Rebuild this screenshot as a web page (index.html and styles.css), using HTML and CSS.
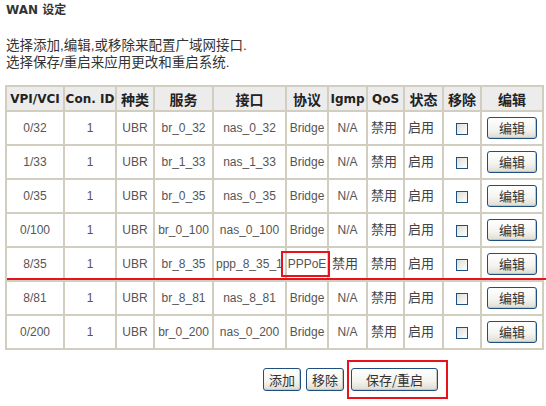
FILE: index.html
```html
<!DOCTYPE html>
<html lang="zh">
<head>
<meta charset="utf-8">
<title>WAN 设定</title>
<link rel="stylesheet" href="styles.css">
</head>
<body>
<h1 class="title">WAN 设定</h1>
<p class="intro">选择添加,编辑,或移除来配置广域网接口.<br>选择保存/重启来应用更改和重启系统.</p>
<div class="table-wrap">
<table class="wan">
<colgroup>
<col class="c1"><col class="c2"><col class="c3"><col class="c4"><col class="c5"><col class="c6"><col class="c7"><col class="c8"><col class="c9"><col class="c10"><col class="c11">
</colgroup>
<thead>
<tr><th class="lat">VPI/VCI</th><th class="lat">Con. ID</th><th>种类</th><th>服务</th><th>接口</th><th>协议</th><th class="lat">Igmp</th><th class="lat">QoS</th><th>状态</th><th>移除</th><th>编辑</th></tr>
</thead>
<tbody>
<tr><td>0/32</td><td>1</td><td>UBR</td><td>br_0_32</td><td>nas_0_32</td><td>Bridge</td><td>N/A</td><td class="zh">禁用</td><td class="zh">启用</td><td><input type="checkbox" class="chk"></td><td><button class="btn edit">编辑</button></td></tr>
<tr><td>1/33</td><td>1</td><td>UBR</td><td>br_1_33</td><td>nas_1_33</td><td>Bridge</td><td>N/A</td><td class="zh">禁用</td><td class="zh">启用</td><td><input type="checkbox" class="chk"></td><td><button class="btn edit">编辑</button></td></tr>
<tr><td>0/35</td><td>1</td><td>UBR</td><td>br_0_35</td><td>nas_0_35</td><td>Bridge</td><td>N/A</td><td class="zh">禁用</td><td class="zh">启用</td><td><input type="checkbox" class="chk"></td><td><button class="btn edit">编辑</button></td></tr>
<tr><td>0/100</td><td>1</td><td>UBR</td><td>br_0_100</td><td>nas_0_100</td><td>Bridge</td><td>N/A</td><td class="zh">禁用</td><td class="zh">启用</td><td><input type="checkbox" class="chk"></td><td><button class="btn edit">编辑</button></td></tr>
<tr><td>8/35</td><td>1</td><td>UBR</td><td>br_8_35</td><td class="clip">ppp_8_35_1</td><td class="mark">PPPoE</td><td class="zh">禁用</td><td class="zh">禁用</td><td class="zh">启用</td><td><input type="checkbox" class="chk"></td><td><button class="btn edit">编辑</button></td></tr>
<tr><td>8/81</td><td>1</td><td>UBR</td><td>br_8_81</td><td>nas_8_81</td><td>Bridge</td><td>N/A</td><td class="zh">禁用</td><td class="zh">启用</td><td><input type="checkbox" class="chk"></td><td><button class="btn edit">编辑</button></td></tr>
<tr><td>0/200</td><td>1</td><td>UBR</td><td>br_0_200</td><td>nas_0_200</td><td>Bridge</td><td>N/A</td><td class="zh">禁用</td><td class="zh">启用</td><td><input type="checkbox" class="chk"></td><td><button class="btn edit">编辑</button></td></tr>
</tbody>
</table>
<div class="redline"></div>
</div>
<div class="actions">
<button class="btn act">添加</button>
<button class="btn act">移除</button>
<span class="boxed"><button class="btn act save">保存/重启</button></span>
</div>
</body>
</html>
```

FILE: styles.css
```css
html, body {
  margin: 0;
  padding: 0;
  background: #fff;
}
body {
  width: 546px;
  height: 406px;
  overflow: hidden;
  font-family: "Liberation Sans", "Noto Sans CJK SC", sans-serif;
  color: #444;
}
.title {
  margin: 0;
  padding: 3px 0 0 6px;
  font-family: "DejaVu Sans", "Noto Sans CJK SC", sans-serif;
  font-size: 12px;
  font-weight: bold;
  line-height: 15px;
  color: #333;
}
.intro {
  margin: 0;
  padding: 19px 0 0 6px;
  font-size: 13.5px;
  line-height: 17px;
  color: #333;
}
.table-wrap {
  position: relative;
  margin: 14px 0 0 5px;
  width: 537px;
}
.wan {
  border-collapse: collapse;
  table-layout: fixed;
  width: 537px;
  font-size: 12px;
}
.c1 { width: 58px; }
.c2 { width: 52px; }
.c3 { width: 38px; }
.c4 { width: 59px; }
.c5 { width: 73px; }
.c6 { width: 42px; }
.c7 { width: 39px; }
.c8 { width: 37px; }
.c9 { width: 39px; }
.c10 { width: 38px; }
.c11 { width: 62px; }
.wan th, .wan td {
  border: 2px solid #d2cebf;
  text-align: center;
  padding: 0;
  white-space: nowrap;
  overflow: hidden;
}
.wan th {
  height: 23px;
  background: #ececec;
  font-family: "Noto Sans CJK SC", sans-serif;
  font-size: 14px;
  font-weight: bold;
  color: #222;
}
.wan th.lat {
  font-family: "DejaVu Sans", sans-serif;
  font-size: 12px;
}
.wan td {
  height: 32px;
  color: #555;
}
.wan td.zh {
  font-family: "Noto Sans CJK SC", sans-serif;
  font-size: 13px;
  text-align: left;
  padding-left: 3px;
  vertical-align: top;
  padding-top: 5px;
  height: 27px;
  color: #444;
}
.wan td.clip {
  text-overflow: clip;
  text-align: left;
  padding-left: 2px;
}
.wan td.mark {
  position: relative;
  overflow: visible;
}
.wan td.mark::after {
  content: "";
  position: absolute;
  left: -6px;
  top: 3px;
  width: 45px;
  height: 22px;
  border: 2px solid #e8121a;
}
.chk {
  appearance: none;
  -webkit-appearance: none;
  display: inline-block;
  width: 12px;
  height: 12px;
  margin: 0;
  vertical-align: middle;
  border: 1px solid #1c5180;
  background: linear-gradient(135deg, #dcdcd7 0%, #f5f5f2 70%, #ffffff 100%);
}
.btn {
  appearance: none;
  -webkit-appearance: none;
  margin: 0;
  padding: 0;
  border: 1px solid #1f4f80;
  border-radius: 3px;
  background: linear-gradient(#ffffff 0%, #f3f3ef 60%, #dedbd0 100%);
  font-family: "Noto Sans CJK SC", sans-serif;
  font-size: 13px;
  line-height: 18px;
  color: #333;
  box-shadow: inset -1px -1px 0 #c9c6bb;
}
.edit {
  width: 50px;
  height: 22px;
  vertical-align: middle;
}
.redline {
  position: absolute;
  left: 2px;
  right: -9px;
  top: 193px;
  height: 2px;
  background: #e8121a;
}
.actions {
  display: flex;
  align-items: center;
  gap: 5px;
  padding: 18px 0 0 263px;
}
.act {
  height: 23px;
  padding: 0 5px;
}
.save {
  width: 87px;
}
.boxed {
  position: relative;
  margin-left: 2px;
  display: inline-flex;
}
.boxed::after {
  content: "";
  position: absolute;
  left: -4px;
  top: -8px;
  right: -10px;
  bottom: -8px;
  border: 2px solid #e8121a;
}
```
